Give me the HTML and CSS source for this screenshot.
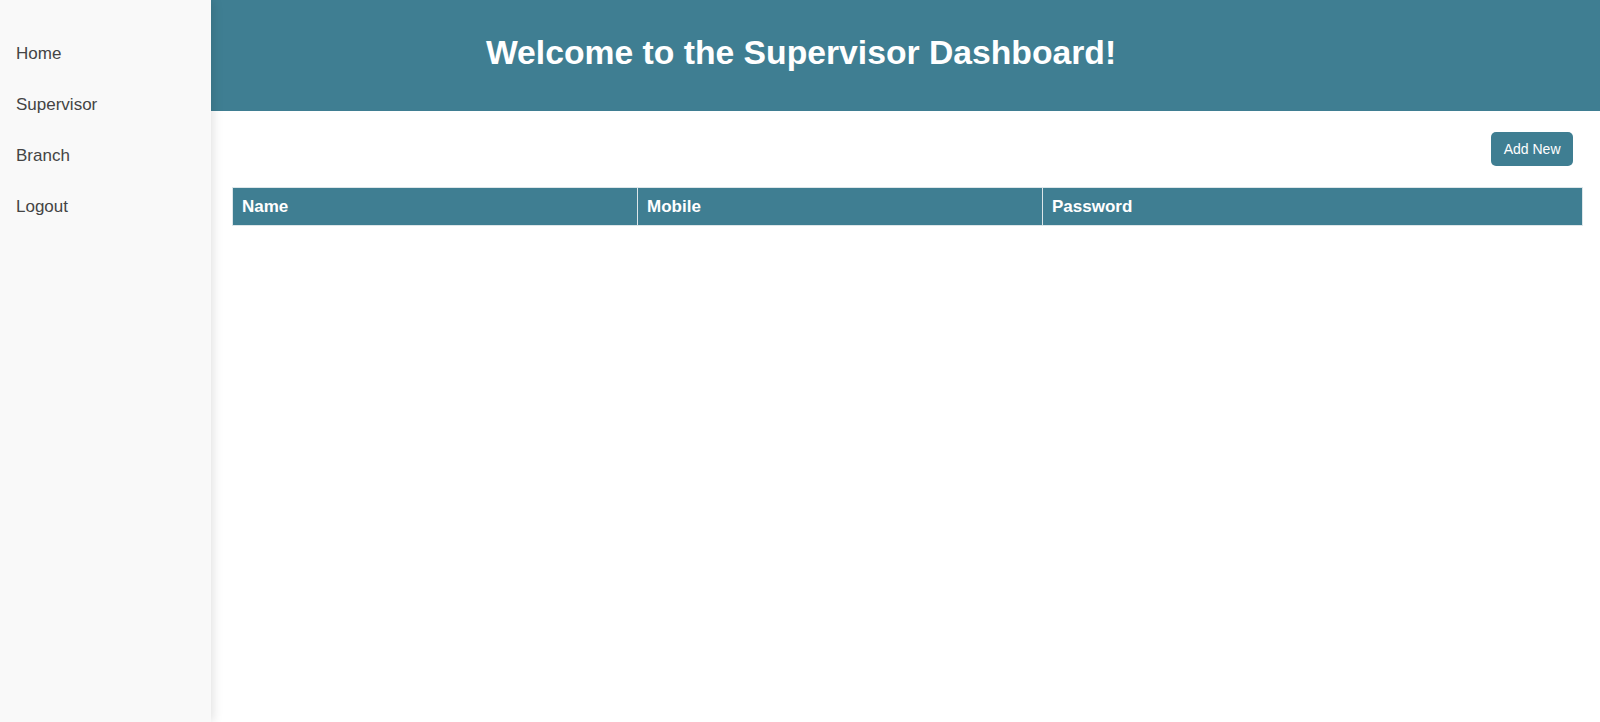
FILE: index.html
```html
<!DOCTYPE html>
<html lang="en">
<head>
<meta charset="utf-8">
<title>Supervisor Dashboard</title>
<link rel="stylesheet" href="styles.css">
</head>
<body>
<div class="layout">
  <aside class="sidebar">
    <nav class="nav">
      <a class="nav-link" href="#">Home</a>
      <a class="nav-link" href="#">Supervisor</a>
      <a class="nav-link" href="#">Branch</a>
      <a class="nav-link" href="#">Logout</a>
    </nav>
  </aside>
  <main class="main">
    <header class="header">
      <h1 class="title">Welcome to the Supervisor Dashboard!</h1>
    </header>
    <section class="content">
      <div class="toolbar">
        <button class="btn-add" type="button">Add New</button>
      </div>
      <table class="data-table">
        <thead>
          <tr>
            <th class="col-name">Name</th>
            <th class="col-mobile">Mobile</th>
            <th class="col-password">Password</th>
          </tr>
        </thead>
        <tbody></tbody>
      </table>
    </section>
  </main>
</div>
</body>
</html>
```

FILE: styles.css
```css
* { box-sizing: border-box; }
html, body { margin: 0; padding: 0; height: 100%; }
body {
  font-family: "Liberation Sans", Arial, sans-serif;
  background: #ffffff;
  color: #333;
}
.layout {
  display: flex;
  min-height: 100vh;
}
.sidebar {
  width: 211px;
  flex: 0 0 211px;
  background: #f9f9f9;
  box-shadow: 2px 0 10px rgba(0, 0, 0, 0.12);
  position: relative;
  z-index: 1;
}
.nav {
  display: flex;
  flex-direction: column;
  padding-top: 28px;
}
.nav-link {
  display: block;
  padding: 15.5px 16px;
  font-size: 17px;
  line-height: 20px;
  color: #444444;
  text-decoration: none;
}
.main {
  flex: 1;
  display: flex;
  flex-direction: column;
}
.header {
  background: #3f7e92;
  height: 111px;
  padding: 33px 209px 0 0;
  text-align: center;
}
.title {
  margin: 0;
  font-size: 33.7px;
  line-height: 39px;
  font-weight: bold;
  color: #ffffff;
}
.content {
  padding: 21px 17px 0 21px;
}
.toolbar {
  display: flex;
  justify-content: flex-end;
  padding-right: 10px;
  margin-bottom: 21px;
}
.btn-add {
  background: #3f7e92;
  color: #ffffff;
  border: none;
  border-radius: 5px;
  font-family: "Liberation Sans", Arial, sans-serif;
  font-size: 14px;
  line-height: 17px;
  padding: 8.5px 12.5px;
  cursor: pointer;
}
.data-table {
  width: 100%;
  border-collapse: collapse;
}
.data-table th {
  background: #3f7e92;
  color: #ffffff;
  text-align: left;
  font-size: 17px;
  line-height: 20px;
  font-weight: bold;
  padding: 8.5px 9px;
  border: 1px solid #dde6e9;
}
.col-name, .col-mobile { width: 30%; }
.col-password { width: 40%; }
```
